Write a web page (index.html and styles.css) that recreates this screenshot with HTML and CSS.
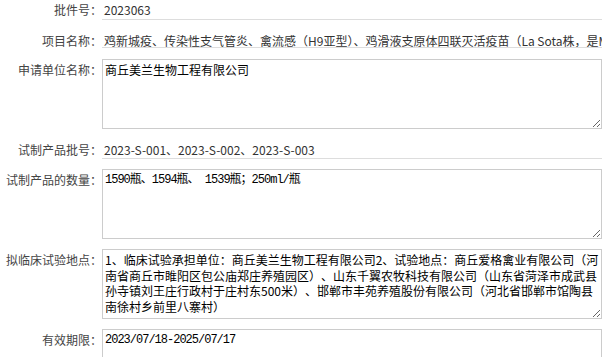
FILE: index.html
```html
<!DOCTYPE html>
<html lang="zh-CN">
<head>
  <meta charset="UTF-8" />
  <title>批件信息</title>
  <link rel="stylesheet" href="styles.css">
</head>
<body>
  <div class="form">
    <div class="row line">
      <div class="label">批件号：</div>
      <div class="val">2023063</div>
    </div>

    <div class="row line">
      <div class="label">项目名称：</div>
      <div class="val tight">鸡新城疫、传染性支气管炎、禽流感（H9亚型）、鸡滑液支原体四联灭活疫苗（La Sota株，是M41株，SD株，HN株）</div>
    </div>

    <div class="row box">
      <div class="label">申请单位名称：</div>
      <textarea readonly>商丘美兰生物工程有限公司</textarea>
    </div>

    <div class="row line">
      <div class="label">试制产品批号：</div>
      <div class="val mid">2023-S-001、2023-S-002、2023-S-003</div>
    </div>

    <div class="row box">
      <div class="label">试制产品的数量：</div>
      <textarea class="mono" readonly>1590瓶、1594瓶、 1539瓶；250ml/瓶</textarea>
    </div>

    <div class="row box">
      <div class="label">拟临床试验地点：</div>
      <textarea class="dense" readonly>1、临床试验承担单位：商丘美兰生物工程有限公司2、试验地点：商丘爱格禽业有限公司（河南省商丘市睢阳区包公庙郑庄养殖园区）、山东千翼农牧科技有限公司（山东省菏泽市成武县孙寺镇刘王庄行政村于庄村东500米）、邯郸市丰苑养殖股份有限公司（河北省邯郸市馆陶县南徐村乡前里八寨村）</textarea>
    </div>

    <div class="row box">
      <div class="label">有效期限：</div>
      <textarea class="mono" readonly>2023/07/18-2025/07/17</textarea>
    </div>
  </div>
</body>
</html>
```

FILE: styles.css
```css
html, body {
  margin: 0;
  overflow: hidden;
  background: #fff;
}
body {
  font-family: "Noto Sans CJK SC", sans-serif;
  font-size: 12px;
  color: #333;
}
.form {
  width: 602px;
  display: flex;
  flex-direction: column;
  gap: 10px;
}
.row {
  display: flex;
}
.row.line {
  align-items: baseline;
}
.row.box {
  align-items: flex-start;
}
.label {
  width: 102px;
  flex: none;
  text-align: right;
  color: #444;
  white-space: nowrap;
}
.row.box .label {
  padding-top: 3px;
  line-height: 16px;
}
.val {
  flex: 1;
  min-width: 0;
  padding-left: 2px;
  line-height: 19px;
  border-bottom: 1px solid #ddd;
  white-space: nowrap;
  overflow: hidden;
}
.val.tight {
  padding-top: 5px;
  line-height: 12px;
}
.val.mid {
  padding-top: 2px;
  line-height: 17px;
}
textarea {
  flex: 1;
  height: 70px;
  box-sizing: border-box;
  margin: 0;
  padding: 2px;
  border: 1px solid #ccc;
  font-family: "Noto Sans CJK SC", sans-serif;
  font-size: 12px;
  line-height: 16px;
  color: #000;
  outline: none;
  overflow: hidden;
  text-spacing-trim: space-all;
}
textarea.mono {
  font-family: "Liberation Mono", "Noto Sans CJK SC", monospace;
  letter-spacing: -1px;
}
textarea.dense {
  line-height: 15.5px;
}
```
